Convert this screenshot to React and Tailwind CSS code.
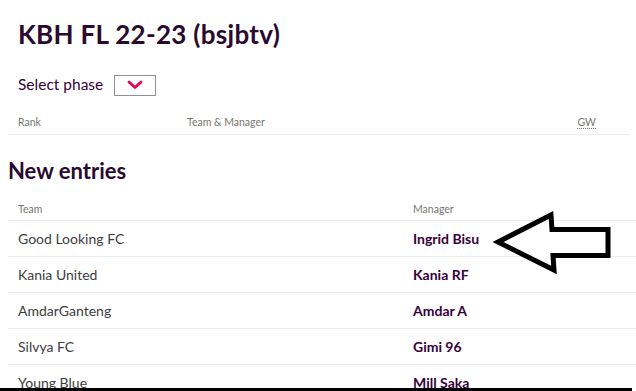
import React from 'react';

const entries = [
    { team: 'Good Looking FC', manager: 'Ingrid Bisu' },
    { team: 'Kania United', manager: 'Kania RF' },
    { team: 'AmdarGanteng', manager: 'Amdar A' },
    { team: 'Silvya FC', manager: 'Gimi 96' },
    { team: 'Young Blue', manager: 'Mill Saka' },
];

function Chevron() {
    return (
        <svg width="16" height="10" viewBox="0 0 16 10" fill="none">
            <path d="M2 2l6 5.5L14 2" stroke="#e90052" strokeWidth="2.8" strokeLinecap="round" strokeLinejoin="round" />
        </svg>
    );
}

function Arrow() {
    return (
        <svg className="absolute left-0 top-0 pointer-events-none" width="636" height="391" viewBox="0 0 636 391" fill="none">
            <path
                d="M498 242 L551 215 L552 229.5 L608 229.5 L608 255.5 L553 255.5 L554 270 Z"
                stroke="#000"
                strokeWidth="5"
                strokeLinejoin="miter"
                fill="#fff"
            />
        </svg>
    );
}

export default function App() {
    return (
        <div className="relative w-[636px] h-[391px] overflow-hidden bg-white text-[#37003c] font-['Lato','Liberation_Sans',sans-serif]">
            <div className="px-[18px] pt-[18px]">
                <h1 className="text-[26px] leading-[32px] font-bold text-[#2a0a2f] tracking-[0.3px]">
                    KBH FL 22-23 (bsjbtv)
                </h1>
                <div className="mt-[24px] flex items-center h-[22px]">
                    <span className="text-[15.5px] text-[#37003c]">Select phase</span>
                    <button className="ml-[11px] w-[42px] h-[21px] border border-[#8f8f8f] flex items-center justify-center">
                        <Chevron />
                    </button>
                </div>
            </div>

            <div className="ml-[8px] mr-[6px] mt-[16px] h-[23px] border-b border-[#ececec] flex items-center text-[10.5px] text-[#76766f] pl-[10px]">
                <span className="w-[169px]">Rank</span>
                <span className="flex-1">Team &amp; Manager</span>
                <span className="mr-[34px] underline decoration-dotted underline-offset-2">GW</span>
            </div>

            <h2 className="ml-[8px] mt-[22px] text-[22px] leading-[28px] font-bold text-[#2a0a2f]">New entries</h2>

            <div className="ml-[8px] mt-[14px]">
                <div className="h-[22px] border-b border-[#ececec] flex items-center text-[10.5px] text-[#76766f] pl-[10px]">
                    <span className="w-[395px]">Team</span>
                    <span>Manager</span>
                </div>
                {entries.map((e, i) => (
                    <div key={i} className="h-[36px] border-b border-[#ececec] flex items-center pl-[10px] text-[14px]">
                        <span className="w-[395px] text-[#3d3d3d]">{e.team}</span>
                        <span className="font-bold text-[#37003c]">{e.manager}</span>
                    </div>
                ))}
            </div>

            <Arrow />
            <div className="absolute left-0 right-[4px] bottom-0 h-[3px] bg-black" />
        </div>
    );
}
